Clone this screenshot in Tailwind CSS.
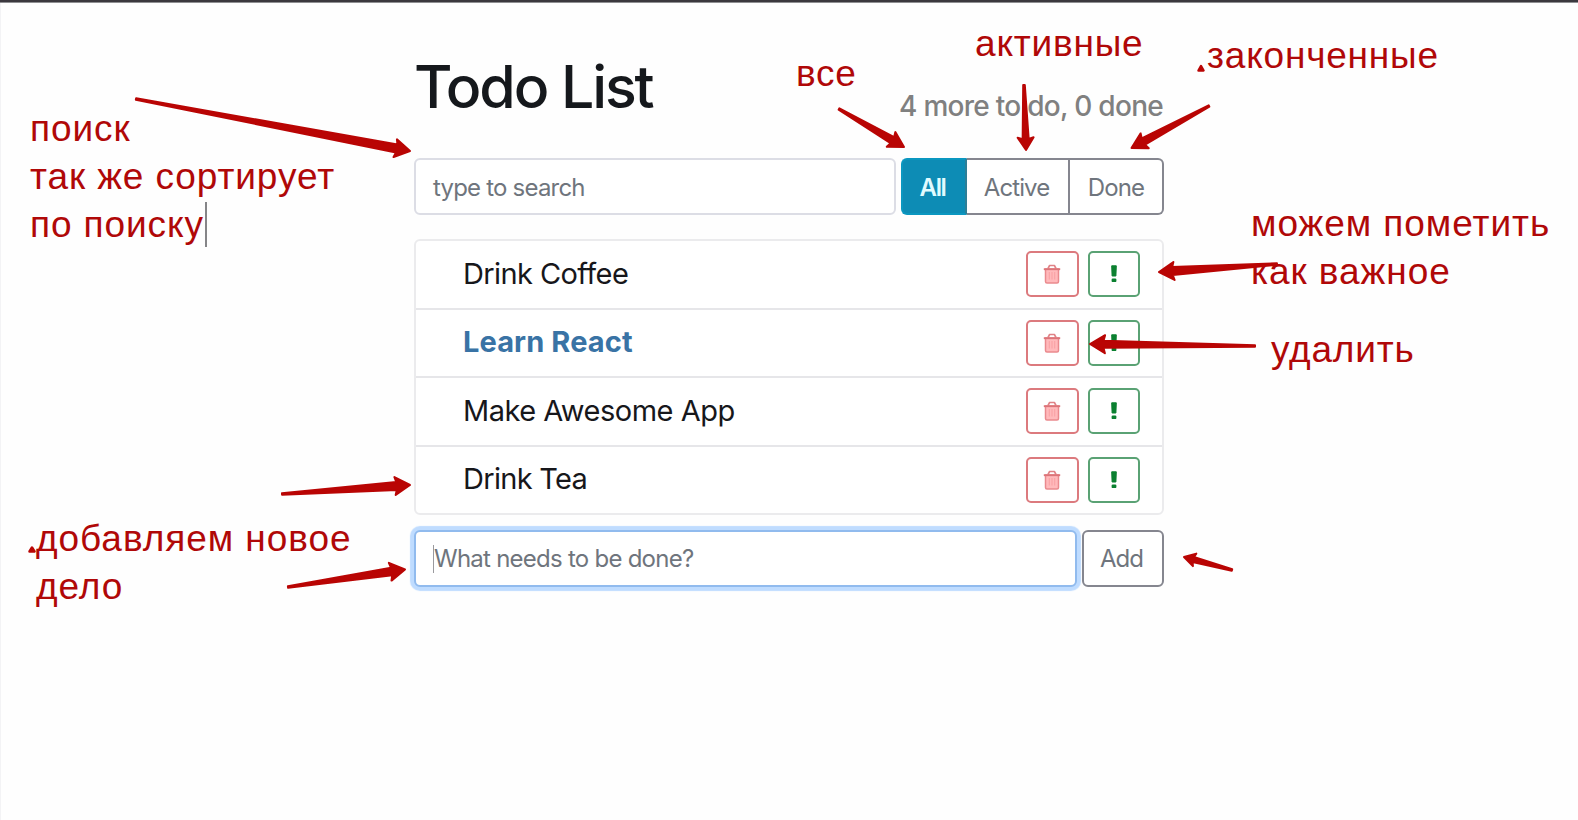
<!DOCTYPE html>
<html lang="ru">
<head>
<meta charset="utf-8">
<title>Todo List</title>
<script src="https://cdn.jsdelivr.net/npm/@tailwindcss/browser@4"></script>
</head>
<body class="relative h-[820px] w-[1578px] overflow-hidden bg-[#fefefe] font-['Inter',sans-serif]">
<svg class="hidden">
  <symbol id="trash" viewBox="0 0 18 22">
    <path d="M5 5.500L6.600 2.500h4.800L13 5.500" fill="none" stroke="#e08387" stroke-width="1.600" stroke-linejoin="round"/>
    <path d="M2.500 6h13v12.500q0 1.500-1.500 1.500H4q-1.500 0-1.500-1.500z" fill="#ffb9bb" stroke="#ea8a8e" stroke-width="1.500"/>
    <path d="M.8 6.200h16.400" stroke="#dc7479" stroke-width="1.900"/>
    <path d="M6.300 9v7.500M9 9v7.500M11.700 9v7.500" stroke="#f9a2a5" stroke-width="1.100"/>
  </symbol>
  <symbol id="bang" viewBox="0 0 8 20">
    <path d="M1.700 1.800h4.600L5.900 12H2.100z" fill="#0b8030" stroke="#0b8030" stroke-linejoin="round"/>
    <rect x="1.600" y="14.500" width="4.800" height="3.600" rx="1.200" fill="#0b8030"/>
  </symbol>
</svg>

<div class="h-[3px] border-b border-[#8f8f92] bg-[#3b383e]"></div>
<main class="ml-[414px] w-[750px] pt-12">
  <header class="flex h-[107px] items-start justify-between">
    <h1 class="text-[59px] leading-[72px] font-medium tracking-[-2.1px] text-[#15181c]">Todo List</h1>
    <h2 class="mt-[37px] mr-px text-[28px] leading-9 font-medium tracking-[-0.72px] text-[#808080]">4 more to do, 0 done</h2>
  </header>

  <div class="flex gap-[5px]">
    <div class="flex h-[57px] w-[482px] items-center rounded-md border-2 border-[#dcdde5] bg-white px-[17px] pt-0.5 text-2xl tracking-[-0.8px] text-[#6f757d]">type to search</div>
    <div class="flex h-[57px] flex-1 text-2xl tracking-[-0.9px] text-[#6f757d]">
      <button class="w-[66px] rounded-l-md border-2 border-[#0b97c0] border-r-[#2d7f97] bg-[#0d8cb5] pt-0.5 pr-[3px] font-semibold tracking-[-1.4px] text-[#e0fbff]">All</button>
      <button class="w-[103px] border-2 border-l-0 border-[#85868f] bg-white pt-0.5 pr-0.5">Active</button>
      <button class="flex-1 rounded-r-md border-2 border-l-0 border-[#85868f] bg-white pt-0.5">Done</button>
    </div>
  </div>

  <ul class="mt-6 divide-y-2 divide-[#e6e6e9] rounded-md border-2 border-[#ebebed] bg-white text-[29px] tracking-[-0.6px] text-[#17171b]">
    <li class="flex h-[68.5px] items-center gap-[9px] pr-[22px] pl-[47px]">
      <span class="flex-1 pb-0.5">Drink Coffee</span>
      <button class="flex h-[46px] w-[53px] items-center justify-center rounded-[5px] border-2 border-[#dc7a7e] pr-px"><svg class="h-[22px] w-[18px]"><use href="#trash"/></svg></button>
      <button class="flex h-[46px] w-[52px] items-center justify-center rounded-[5px] border-2 border-[#5aa274] pr-px"><svg class="h-5 w-2"><use href="#bang"/></svg></button>
    </li>
    <li class="flex h-[68.5px] items-center gap-[9px] pr-[22px] pl-[47px]">
      <span class="flex-1 pb-0.5 font-bold tracking-[0.1px] text-[#3973a5]">Learn React</span>
      <button class="flex h-[46px] w-[53px] items-center justify-center rounded-[5px] border-2 border-[#dc7a7e] pr-px"><svg class="h-[22px] w-[18px]"><use href="#trash"/></svg></button>
      <button class="flex h-[46px] w-[52px] items-center justify-center rounded-[5px] border-2 border-[#5aa274] pr-px"><svg class="h-5 w-2"><use href="#bang"/></svg></button>
    </li>
    <li class="flex h-[68.5px] items-center gap-[9px] pr-[22px] pl-[47px]">
      <span class="flex-1 pb-0.5 tracking-[-0.5px]">Make Awesome App</span>
      <button class="flex h-[46px] w-[53px] items-center justify-center rounded-[5px] border-2 border-[#dc7a7e] pr-px"><svg class="h-[22px] w-[18px]"><use href="#trash"/></svg></button>
      <button class="flex h-[46px] w-[52px] items-center justify-center rounded-[5px] border-2 border-[#5aa274] pr-px"><svg class="h-5 w-2"><use href="#bang"/></svg></button>
    </li>
    <li class="flex h-[66.5px] items-center gap-[9px] pr-[22px] pl-[47px]">
      <span class="flex-1 pb-0.5 tracking-[-0.7px]">Drink Tea</span>
      <button class="flex h-[46px] w-[53px] items-center justify-center rounded-[5px] border-2 border-[#dc7a7e] pr-px"><svg class="h-[22px] w-[18px]"><use href="#trash"/></svg></button>
      <button class="flex h-[46px] w-[52px] items-center justify-center rounded-[5px] border-2 border-[#5aa274] pr-px"><svg class="h-5 w-2"><use href="#bang"/></svg></button>
    </li>
  </ul>

  <div class="mt-[15px] flex gap-[5px] text-2xl text-[#6f757d]">
    <div class="flex h-[57px] w-[663px] items-center rounded-md border-2 border-[#91bbee] bg-white px-[17px] tracking-[-0.75px] shadow-[0_0_1px_4px_#bfdcff]"><span class="h-7 w-px bg-[#9a9a9e]"></span>What needs to be done?</div>
    <button class="h-[57px] w-[82px] rounded-md border-2 border-[#85868f] bg-white pr-[3px] tracking-[-0.9px]">Add</button>
  </div>
</main>

<!-- Annotations over the app -->
<div class="absolute top-[3px] left-0 h-[817px] w-px bg-[#f3f3f5]"></div>
<div class="font-['Liberation_Sans',Arial,sans-serif] text-[37px] leading-[48px] tracking-[0.8px] whitespace-nowrap text-[#b00808]">
  <p class="absolute top-[105px] left-[30px] tracking-[0.9px]">поиск<br>так же сортирует<br>по поиску</p>
  <p class="absolute top-[50px] left-[796px]">все</p>
  <p class="absolute top-[20px] left-[975px]">активные</p>
  <p class="absolute top-[32px] left-[1207px]">законченные</p>
  <p class="absolute top-[200px] left-[1251px] tracking-[0.95px]">можем пометить<br>как важное</p>
  <p class="absolute top-[326px] left-[1271px]">удалить</p>
  <p class="absolute top-[515px] left-[36px] tracking-[0.95px]">добавляем новое<br>дело</p>
</div>
<div class="absolute top-[202px] left-[205px] h-[45px] w-[2px] bg-[#858588]"></div>
<svg id="arrows" class="pointer-events-none absolute top-0 left-0" width="1578" height="820" fill="#b90504" stroke="#b90504" stroke-width="2" stroke-linejoin="round">
  <path d="M1201 66l2.500 4.500h-5zM32 547.500l2.500 4h-5z" stroke-width="2.500"/>
</svg>
<script>
// tail x, tail y, tip x, tip y, head length, head half-width, shaft half-width
const arrows = [
  [136,99,410,151,14.500,9,4],
  [839,109,904,147,14.500,8.500,3.500],
  [1024,85,1026,150,12,8,3],
  [1209,106,1131.500,148,14.500,8.500,3.500],
  [1277,264,1159,272,14.500,9,4],
  [1255,346,1090,344,14.500,9,3.500],
  [282,494,410,485,14.500,9,4],
  [288,587,405,569.500,14.500,9,3.800],
  [1232,570,1184,557,10.500,6.500,2.500]
];
for (const [ax,ay,bx,by,hl,hw,sw] of arrows) {
  const L = Math.hypot(bx-ax, by-ay), dx = (bx-ax)/L, dy = (by-ay)/L;
  const p = (u,v) => `${(ax+dx*u-dy*v).toFixed(2)},${(ay+dy*u+dx*v).toFixed(2)}`;
  const g = document.createElementNS('http://www.w3.org/2000/svg','polygon');
  g.setAttribute('points',[p(0,.8),p(L-hl+1,sw),p(L-hl-.5,hw),p(L,0),p(L-hl-.5,-hw),p(L-hl+1,-sw),p(0,-.8)].join(' '));
  document.getElementById('arrows').append(g);
}
</script>
</body>
</html>
